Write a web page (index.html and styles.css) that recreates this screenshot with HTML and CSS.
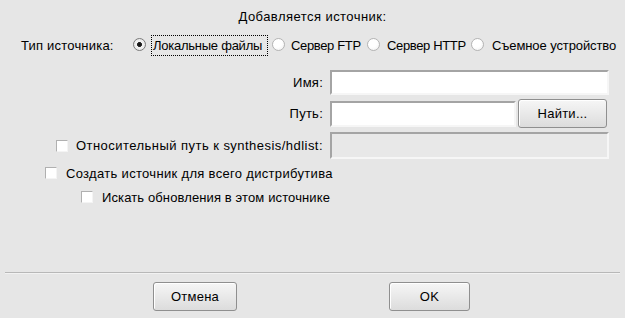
FILE: index.html
```html
<!DOCTYPE html>
<html lang="ru">
<head>
<meta charset="utf-8">
<link rel="stylesheet" href="styles.css">
</head>
<body>
<div class="dialog">
  <div class="title">Добавляется источник:</div>
  <div class="type-row">
    <span class="type-label">Тип источника:</span>
    <span class="radio checked"></span><span class="opt o1 focus">Локальные файлы</span>
    <span class="radio"></span><span class="opt o2">Сервер FTP</span>
    <span class="radio"></span><span class="opt o3">Сервер HTTP</span>
    <span class="radio"></span><span class="opt o4">Съемное устройство</span>
  </div>
  <div class="form">
    <div class="lbl">Имя:</div>
    <div class="field"><span class="entry wide"></span></div>
    <div class="lbl">Путь:</div>
    <div class="field"><span class="entry path"></span><span class="btn find">Найти...</span></div>
    <div class="lbl"><span class="check"></span><span class="ctext rel">Относительный путь к synthesis/hdlist:</span></div>
    <div class="field"><span class="entry wide disabled"></span></div>
  </div>
  <div class="crow c2"><span class="check"></span><span class="ctext">Создать источник для всего дистрибутива</span></div>
  <div class="crow c3"><span class="check"></span><span class="ctext">Искать обновления в этом источнике</span></div>
  <div class="spacer"></div>
  <div class="sep"></div>
  <div class="buttons">
    <span class="btn act">Отмена</span>
    <span class="btn act ok">OK</span>
  </div>
</div>
</body>
</html>
```
FILE: styles.css
```css
html, body {
  margin: 0;
  padding: 0;
}
body {
  width: 625px;
  height: 318px;
  background: #e6e6e6;
  font-family: "Liberation Sans", Arial, sans-serif;
  font-size: 13px;
  letter-spacing: 0.25px;
  color: #000;
  overflow: hidden;
  white-space: nowrap;
}
.dialog {
  height: 318px;
  display: flex;
  flex-direction: column;
}
.title {
  padding-top: 9px;
  height: 16px;
  line-height: 16px;
  text-align: center;
  letter-spacing: 0.45px;
}
.type-row {
  margin-top: 10px;
  height: 21px;
  display: flex;
  align-items: center;
  padding-left: 21px;
}
.type-label {
  width: 112px;
  flex: none;
  letter-spacing: 0.2px;
}
.radio {
  box-sizing: border-box;
  width: 13px;
  height: 13px;
  margin-top: -2px;
  border-radius: 50%;
  border: 1px solid #b4b4b4;
  background: radial-gradient(circle at 40% 35%, #ffffff 0, #ffffff 45%, #ececec 100%);
  flex: none;
}
.radio.checked {
  border: 1px solid #7a7a7a;
  background: radial-gradient(circle at 50% 50%, #111 0, #222 28%, #f4f4f4 34%, #e0e0e0 100%);
}
.opt {
  box-sizing: border-box;
  flex: none;
  line-height: 19px;
  padding: 0 0 0 1px;
  border: 1px solid transparent;
}
.opt.focus {
  border: 1px dotted #000;
}
.o1 {
  width: 117px;
  margin: 0 4px 0 5px;
  letter-spacing: -0.25px;
}
.o2 {
  width: 74px;
  margin: 0 4px 0 4px;
  letter-spacing: -0.35px;
}
.o3 {
  width: 82px;
  margin: 0 4px 0 5px;
  letter-spacing: -0.35px;
}
.o4 {
  width: 129px;
  margin: 0 0 0 6px;
  letter-spacing: -0.1px;
}
.form {
  margin-top: 14px;
  display: grid;
  grid-template-columns: 323px 279px;
  column-gap: 7px;
  row-gap: 4px;
  align-items: center;
}
.lbl {
  display: flex;
  justify-content: flex-end;
  align-items: center;
  text-align: right;
}
.field {
  display: flex;
  align-items: center;
}
.entry {
  box-sizing: border-box;
  display: block;
  height: 25px;
  background: #fff;
  border-top: 2px solid #a4a4a4;
  border-left: 2px solid #a4a4a4;
  border-right: 2px solid #f6f6f6;
  border-bottom: 2px solid #f6f6f6;
}
.entry.wide {
  width: 279px;
}
.entry.path {
  width: 186px;
  height: 26px;
}
.entry.disabled {
  background: #e8e8e8;
  height: 27px;
}
.btn {
  box-sizing: border-box;
  display: flex;
  align-items: center;
  justify-content: center;
  height: 29px;
  border: 1px solid #8f8f8f;
  border-radius: 3px;
  background: linear-gradient(#f6f6f6, #dcdcdc);
  box-shadow: inset 1px 1px 0 #fff;
}
.find {
  width: 89px;
  margin-left: 2px;
}
.check {
  box-sizing: border-box;
  width: 12px;
  height: 12px;
  background: #fff;
  border-top: 1px solid #b0b0b0;
  border-left: 1px solid #b0b0b0;
  border-right: 1px solid #f4f4f4;
  border-bottom: 1px solid #f4f4f4;
  flex: none;
}
.ctext {
  margin-left: 8px;
}
.ctext.rel {
  letter-spacing: 0.46px;
}
.crow {
  display: flex;
  align-items: center;
  height: 20px;
}
.crow .ctext {
  margin-left: 9px;
}
.c2 {
  margin-top: 4px;
  padding-left: 45px;
  letter-spacing: 0.32px;
}
.c3 {
  margin-top: 4px;
  padding-left: 81px;
  letter-spacing: 0.12px;
}
.spacer {
  flex: 1;
}
.sep {
  margin: 0 5px;
  height: 1px;
  background: #b8b8b8;
  border-bottom: 1px solid #f2f2f2;
}
.buttons {
  display: flex;
  padding: 8px 0 7px 153px;
  gap: 152px;
}
.act {
  width: 84px;
}
.ok {
  width: 81px;
}
```
